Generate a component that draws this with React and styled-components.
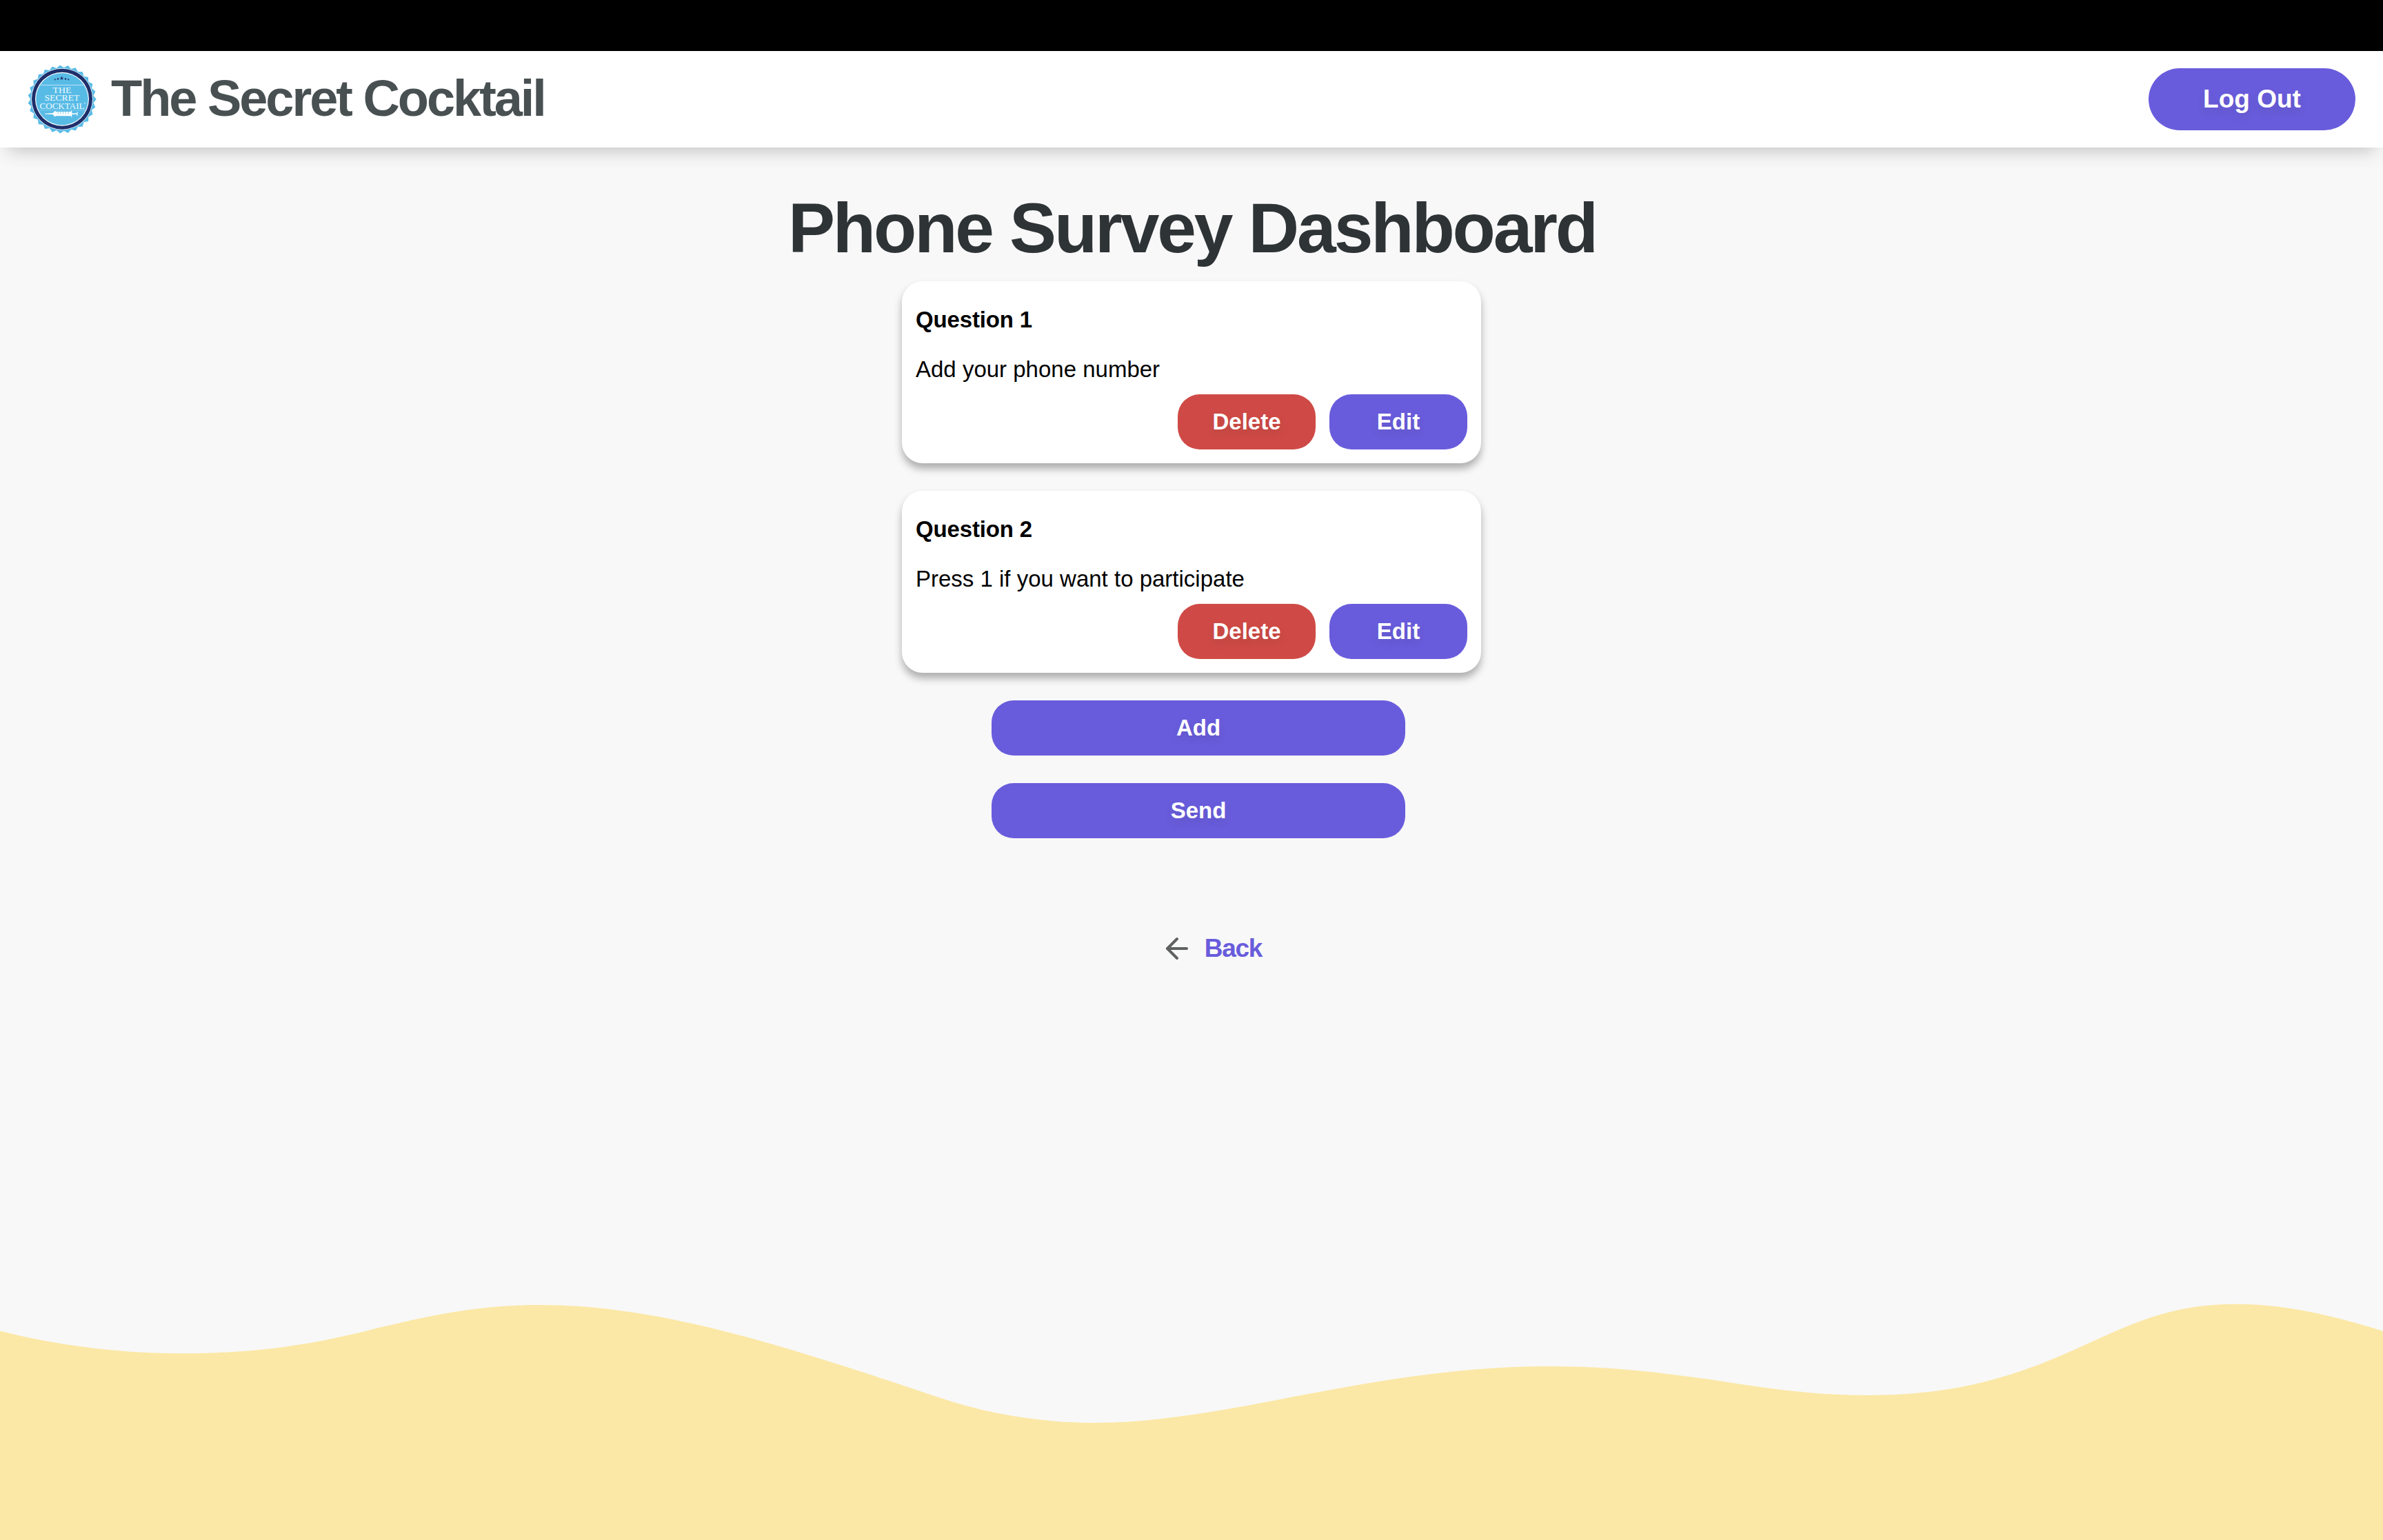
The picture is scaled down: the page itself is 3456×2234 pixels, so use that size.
import React from 'react';
import styled, { createGlobalStyle } from 'styled-components';
import { ArrowLeft } from 'lucide-react';

const sans = '"Liberation Sans", Arial, Helvetica, sans-serif';

const GlobalStyle = createGlobalStyle`
  * { box-sizing: border-box; }
  body { margin: 0; background: #f8f8f8; font-family: ${sans}; }
  h1, h2, p { margin: 0; }
`;

const Page = styled.div`
  display: flex;
  flex-direction: column;
  height: 2234px;
  overflow: hidden;
  background: #f8f8f8;
`;

const TopStrip = styled.div`
  flex: none;
  height: 74px;
  background: #000;
`;

const Header = styled.header`
  flex: none;
  display: flex;
  align-items: center;
  justify-content: space-between;
  height: 140px;
  padding: 0 40px;
  background: #fff;
  box-shadow: 0 16px 24px -12px rgba(46, 51, 54, 0.28);
`;

const Brand = styled.div`
  display: flex;
  align-items: center;
  gap: 21px;
`;

const Logo = styled.svg`
  display: block;
  width: 100px;
  height: 102px;
`;

const BrandName = styled.span`
  padding-bottom: 2px;
  color: #485052;
  font-size: 74px;
  font-weight: 700;
  line-height: 84px;
  letter-spacing: -3.05px;
  white-space: nowrap;
`;

const Button = styled.button`
  width: ${(p) => p.$width}px;
  height: ${(p) => (p.$large ? 90 : 80)}px;
  padding: 0;
  border: 0;
  border-radius: ${(p) => (p.$large ? 45 : 32)}px;
  background: ${(p) => (p.$danger ? '#cf4a46' : '#695cdc')};
  color: #fff;
  font-family: ${sans};
  font-size: ${(p) => (p.$large ? 37 : 33)}px;
  font-weight: 700;
  letter-spacing: 0;
  text-shadow: 0 6px 12px rgba(46, 51, 54, 0.12);
`;

const Main = styled.main`
  flex: 1;
  display: flex;
  flex-direction: column;
  align-items: center;
  padding-top: 59px;
`;

const Title = styled.h1`
  margin: 0 0 19px 2px;
  color: #2e3336;
  font-size: 102px;
  line-height: 116px;
  letter-spacing: -3.15px;
  white-space: nowrap;
`;

const QuestionList = styled.section`
  display: flex;
  flex-direction: column;
  gap: 40px;
`;

const Card = styled.article`
  width: 840px;
  height: 264px;
  padding: 37px 20px 20px;
  border-radius: 30px;
  background: #fff;
  box-shadow: 0 8px 12px rgba(0, 0, 0, 0.3);
  color: #000;
  font-size: 33px;
  line-height: 37px;
`;

const CardTitle = styled.h2`
  margin-bottom: 35px;
  font-size: inherit;
  font-weight: 700;
  letter-spacing: -0.15px;
`;

const CardText = styled.p`
  letter-spacing: 0;
`;

const CardActions = styled.div`
  display: flex;
  justify-content: flex-end;
  gap: 20px;
  margin-top: 18px;
`;

const PageActions = styled.div`
  display: flex;
  flex-direction: column;
  gap: 40px;
  margin: 40px 0 0 20px;
`;

const BackLink = styled.a`
  display: flex;
  align-items: center;
  gap: 16px;
  margin: 136px 0 0 57px;
  color: #695cdc;
  font-size: 37px;
  font-weight: 700;
  line-height: 48px;
  letter-spacing: -1.3px;

  svg {
    display: block;
    color: #5f6060;
  }
`;

const Wave = styled.svg`
  flex: none;
  display: block;
  width: 100%;
  height: 344px;
`;

const questions = [
  { title: 'Question 1', text: 'Add your phone number' },
  { title: 'Question 2', text: 'Press 1 if you want to participate' },
];

const sealPoints = Array.from({ length: 54 }, (_, i) => {
  const a = (i / 54) * Math.PI * 2 - 1.63;
  const r = i % 2 ? 45.8 : 49.7;
  return `${(50 + r * Math.cos(a)).toFixed(2)},${(51 + r * Math.sin(a)).toFixed(2)}`;
}).join(' ');

function SealLogo() {
  return (
    <Logo viewBox="0 0 100 102" aria-label="The Secret Cocktail">
      <polygon points={sealPoints} fill="#58bbe6" />
      <circle cx="50" cy="50.7" r="44.8" fill="#e6f3fb" />
      <circle cx="50" cy="50.7" r="44" fill="#1f2f6b" />
      <circle cx="50" cy="50.7" r="39" fill="#fff" />
      <circle cx="50" cy="50.7" r="37.8" fill="#58bbe6" />
      <g fill="#1f2f6b">
        <path d="M49.5 17.6l.8 2.1h2.1l-1.7 1.3.7 2.1-1.9-1.3-1.9 1.3.7-2.1-1.7-1.3h2.1z" />
        <circle cx="44" cy="21.5" r="1.3" />
        <circle cx="55" cy="21.5" r="1.3" />
        <circle cx="39.8" cy="22.3" r="1.1" />
        <circle cx="59.2" cy="22.3" r="1.1" />
      </g>
      <path d="M18.5 30.4h63" stroke="#c9eaf8" strokeWidth="0.9" />
      <path d="M16 66.8h68" stroke="#8fd2ef" strokeWidth="0.7" />
      <g fill="#eefafe" fontFamily='"Liberation Serif", serif' textAnchor="middle">
        <text x="50" y="41.8" fontSize="13" textLength="27" lengthAdjust="spacingAndGlyphs">THE</text>
        <text x="50" y="53.4" fontSize="13" textLength="51" lengthAdjust="spacingAndGlyphs">SECRET</text>
        <text x="50" y="65" fontSize="13.5" textLength="65" lengthAdjust="spacingAndGlyphs">COCKTAIL</text>
      </g>
      <circle cx="83" cy="56.6" r="0.9" fill="#cdeefa" />
      <g fill="#fff">
        <path d="M25 71.7l12-.6v1.9l-12-.6z" />
        <path d="M37 70.4l2.6-2.4h1v8.2h-1L37 73.8z" />
        <rect x="40" y="69" width="23.5" height="6.2" />
        <rect x="63" y="67.5" width="1.3" height="9" />
        <rect x="64" y="71.3" width="7.6" height="1.5" />
        <rect x="71.4" y="69.5" width="1.2" height="5.2" />
      </g>
      <path d="M44 69.2v3.2M47.8 69.2v3.2M51.6 69.2v3.2M55.4 69.2v3.2M59.2 69.2v3.2" stroke="#58bbe6" strokeWidth="0.8" />
    </Logo>
  );
}

export default function App() {
  return (
    <Page>
      <GlobalStyle />
      <TopStrip />
      <Header>
        <Brand>
          <SealLogo />
          <BrandName>The Secret Cocktail</BrandName>
        </Brand>
        <Button $large $width={300}>Log Out</Button>
      </Header>
      <Main>
        <Title>Phone Survey Dashboard</Title>
        <QuestionList>
          {questions.map((q) => (
            <Card key={q.title}>
              <CardTitle>{q.title}</CardTitle>
              <CardText>{q.text}</CardText>
              <CardActions>
                <Button $danger $width={200}>Delete</Button>
                <Button $width={200}>Edit</Button>
              </CardActions>
            </Card>
          ))}
        </QuestionList>
        <PageActions>
          <Button $width={600}>Add</Button>
          <Button $width={600}>Send</Button>
        </PageActions>
        <BackLink>
          <ArrowLeft size={48} strokeWidth={2} />
          Back
        </BackLink>
      </Main>
      <Wave viewBox="0 1890 3456 344" preserveAspectRatio="none" aria-hidden="true">
        <path
          fill="#fbe8a6"
          d="M0 1930.7C80 1951 170 1963.3 266 1963.3C366 1963.3 444 1952.5 534 1930C625 1907 700 1893 782 1893C950 1893 1120 1946 1355 2025C1425 2049 1500 2064 1590 2064C1780 2064 1990 1982 2248 1982C2340 1982 2425 1993 2510 2005.7C2580 2016.5 2640 2024 2711 2024C2840 2024 2930 1995 3028 1949C3100 1916 3155 1891.7 3243 1891.7C3315 1891.7 3385 1909 3456 1931V2234H0Z"
        />
      </Wave>
    </Page>
  );
}
